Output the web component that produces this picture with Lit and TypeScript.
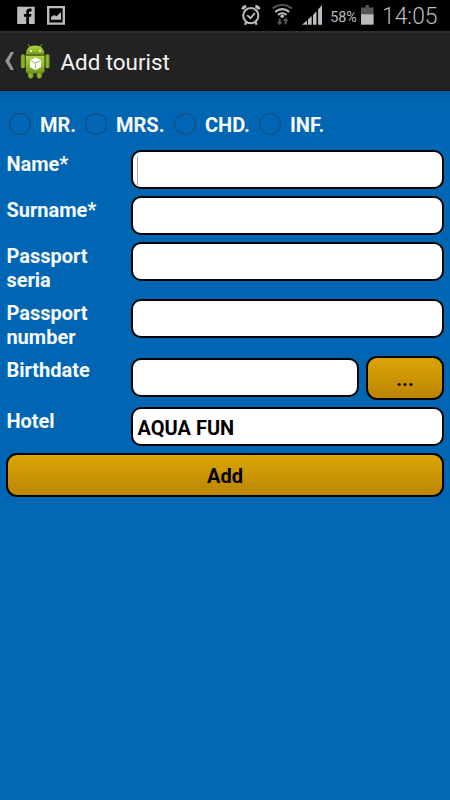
import { LitElement, html, css } from "lit";
import { customElement, property } from "lit/decorators.js";

@customElement("status-bar")
class StatusBar extends LitElement {
  static styles = css`
    :host { display: flex; height: 31px; background: #000; }
    svg { display: block; width: 450px; height: 31px; }
    text { font-family: Roboto, "Liberation Sans", sans-serif; font-weight: 400; fill: #bcbcbc; }
    .pct { font-size: 15px; }
    .clock { font-size: 23.5px; font-weight: 350; }
  `;
  render() {
    return html`<svg viewBox="0 0 450 31">
      <rect x="17.2" y="6.7" width="17.5" height="17.3" fill="#bcbcbc"/>
      <path d="M26.2 24V16.7H23.9V13.9H26.2V12.2Q26.2 8.6 29.7 8.6H31.5V11.4H30.2Q29 11.4 29 12.7V13.9H31.4L31 16.7H29V24Z" fill="#000"/>
      <path d="M47 6h18v18.8H47zM49.4 8.3v14.2h13.2V8.3z" fill="#bcbcbc" fill-rule="evenodd"/>
      <path d="M51 19.8V17l3.1-2.1 2.4 1.4 4.5-4.2v7.7z" fill="#bcbcbc"/>
      <g fill="none" stroke="#bcbcbc">
        <circle cx="250.8" cy="15.7" r="7.6" stroke-width="2"/>
        <path d="M247.2 15.1l3.2 3 4.5-5" stroke-width="1.8"/>
        <path d="M242.5 9.3Q243.4 6.9 246.2 6.3M255.4 6.3Q258.4 6.9 259.1 9.3" stroke-width="3"/>
        <path d="M246.3 22l-1.4 2.8M255.3 22l1.4 2.8" stroke-width="2.2"/>
      </g>
      <g fill="none" stroke-width="2.1">
        <path d="M272.6 8.3Q282.2 1.3 291.8 8.3" stroke="#555"/>
        <path d="M275.2 11.8Q282.2 6.5 289.2 11.8" stroke="#bcbcbc"/>
        <path d="M278 14.9Q282.2 11.6 286.4 14.9" stroke="#bcbcbc"/>
      </g>
      <circle cx="282.2" cy="16.3" r="1.8" fill="#bcbcbc"/>
      <path d="M278.7 18.5h2v3.2h2l-3 3.5-3-3.5h2zM285.6 17.6l-3 3.5h2v3.2h2v-3.2h2z" fill="#555"/>
      <path d="M302 24.8l5-4.3v4.3zM308 19.6l3.7-3.7v8.9H308zM313 14.9l3.5-3.7v13.6H313zM318.1 9.4L322 5v19.8h-3.9z" fill="#bcbcbc"/>
      <text class="pct" x="330.2" y="21.5" textLength="26.6" lengthAdjust="spacingAndGlyphs">58%</text>
      <path d="M361 14.2V7.4h4.5V5h3.4v2.4h4.7v6.8z" fill="#555"/>
      <rect x="361" y="14.2" width="12.6" height="10.5" fill="#bcbcbc"/>
      <text class="clock" x="382" y="24.4" textLength="55.5" lengthAdjust="spacingAndGlyphs">14:05</text>
    </svg>`;
  }
}

@customElement("action-bar")
class ActionBar extends LitElement {
  static styles = css`
    :host { display: flex; box-sizing: border-box; height: 60px; background: #222; border-top: 2px solid #303030; border-bottom: 1px solid #141414; color: #f3f3f3; align-items: center; }
    svg { flex: none; width: 56px; height: 57px; }
    .title { font: 400 22.4px/28px Roboto, "Liberation Sans", sans-serif; letter-spacing: -.03px; margin-left: 4.5px; white-space: nowrap; }
  `;
  render() {
    return html`<svg viewBox="0 33 56 57">
      <defs>
        <linearGradient id="g" x2="0" y2="1"><stop stop-color="#b0d34a"/><stop offset=".5" stop-color="#97bd2d"/><stop offset="1" stop-color="#6d921b"/></linearGradient>
        <linearGradient id="a" x2="1" y2="0"><stop stop-color="#6f9420"/><stop offset=".5" stop-color="#92b731"/><stop offset="1" stop-color="#66891b"/></linearGradient>
      </defs>
      <path d="M10.7 52H14L9.3 61l4.7 9h-3.3L5.2 61z" fill="#949494"/>
      <path d="M30.8 47.8l-2.4-3.4M39.5 47.8l2.4-3.4" stroke="#87ab2b" stroke-width="1" stroke-linecap="round"/>
      <rect x="28" y="70" width="5.5" height="8.5" rx="2.4" fill="url(#a)"/>
      <rect x="36.6" y="70" width="5.5" height="8.5" rx="2.4" fill="url(#a)"/>
      <rect x="20.8" y="54.3" width="4.4" height="14" rx="1.8" fill="url(#a)"/>
      <rect x="45.3" y="54.3" width="4.4" height="14" rx="1.8" fill="url(#a)"/>
      <path d="M25.8 54.8Q26 45.6 35.1 45.6T44.5 54.8z" fill="url(#g)"/>
      <path d="M25.8 55.5h18.7V71q0 2.3-2.3 2.3H28.1Q25.8 73.3 25.8 71z" fill="url(#g)"/>
      <path d="M25.8 55.2h18.7" stroke="#587519" stroke-width=".8"/>
      <circle cx="31" cy="51" r="1" fill="#fff"/><circle cx="40" cy="51" r="1" fill="#fff"/>
      <path d="M35.4 57.5l5.7 2.6v6.9l-5.7 3.3-5.4-3.3v-6.9z" fill="#fff"/>
      <path d="M30.3 60.6l5.1 2.3 5.3-2.3M35.4 62.9v6.6" stroke="#8aae31" stroke-width=".8" fill="none"/>
    </svg><span class="title">Add tourist</span>`;
  }
}

@customElement("form-row")
class FormRow extends LitElement {
  @property() label = "";
  @property() value = "";
  @property({ type: Boolean }) picker = false;
  @property({ type: Boolean }) caret = false;
  static styles = css`
    :host { display: flex; align-items: flex-start; font: bold 20px/24px Roboto, "Liberation Sans", sans-serif; }
    .label { flex: none; width: 95px; margin-right: 30px; padding: 2px 0 0 .4px; box-sizing: border-box; color: #f8faff; }
    .field { flex: 1; box-sizing: border-box; height: 39px; border: 2px solid #080405; border-radius: 10px; background: #fff; color: #000; padding: 7px 4.5px; display: flex; }
    .picker .field { margin-top: 2px; }
    .wrap { flex: 1; display: flex; gap: 7px; }
    .caret { width: 1px; height: 29px; margin: -3px 0 0 -1px; background: #aaa; }
    .more { box-sizing: border-box; width: 78px; height: 44px; border: 2px solid #080405; border-radius: 11px; background: linear-gradient(#dba506, #bc8505); color: #000; text-align: center; padding-top: 9px; }
  `;
  render() {
    return html`<div class="label">${this.label}</div>
      <div class="wrap ${this.picker ? "picker" : ""}">
        <div class="field">${this.caret ? html`<i class="caret"></i>` : this.value}</div>
        ${this.picker ? html`<div class="more">...</div>` : ""}
      </div>`;
  }
}

@customElement("app-root")
class AppRoot extends LitElement {
  static styles = css`
    :host { display: flex; flex-direction: column; width: 450px; height: 800px; overflow: hidden; background: #0268b4; font: bold 20px/24px Roboto, "Liberation Sans", sans-serif; }
    .form { flex: none; display: flex; flex-direction: column; gap: 7px; padding: 0 6px; background: linear-gradient(#005da4, #0065b1 10px, #0066b3 20px); }
    .titles { display: flex; height: 52px; box-sizing: border-box; padding: 22px 0 0 3px; color: #f8faff; }
    .option { display: flex; white-space: nowrap; }
    .ring { box-sizing: border-box; width: 22px; height: 22px; border: 1.2px solid #1b466c; border-radius: 50%; margin-right: 9px; }
    .o0 { width: 76px; }
    .o1 { width: 89px; }
    .o2 { width: 85px; }
    .add { box-sizing: border-box; height: 44px; border: 2px solid #080405; border-radius: 11px; background: linear-gradient(#dba506, #bc8505); text-align: center; padding-top: 9px; }
  `;
  render() {
    return html`<status-bar></status-bar>
      <action-bar></action-bar>
      <div class="form">
        <div class="titles">
          ${["MR.", "MRS.", "CHD.", "INF."].map((t, i) => html`<div class="option o${i}"><span class="ring"></span>${t}</div>`)}
        </div>
        <form-row label="Name*" caret></form-row>
        <form-row label="Surname*"></form-row>
        <form-row label="Passport seria"></form-row>
        <form-row label="Passport number"></form-row>
        <form-row label="Birthdate" picker></form-row>
        <form-row label="Hotel" value="AQUA FUN"></form-row>
        <div class="add">Add</div>
      </div>`;
  }
}
